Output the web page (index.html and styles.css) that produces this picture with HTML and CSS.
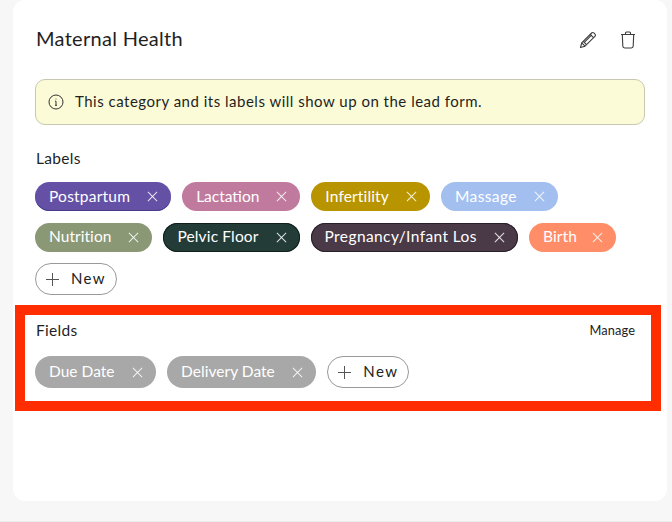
FILE: index.html
```html
<!DOCTYPE html>
<html lang="en">
<head>
<meta charset="utf-8">
<title>Maternal Health</title>
<link rel="stylesheet" href="styles.css">
</head>
<body>
<main class="card">
  <header class="head">
    <h1 class="title">Maternal Health</h1>
    <div class="actions">
      <svg class="icon" width="18" height="18" viewBox="0 0 18 18" fill="none" stroke="#3c3c3c" stroke-width="1.1" stroke-linejoin="round"><path d="M1.5 16.5l1.2-4.6L12.6 2c.7-.7 1.6-.7 2.2-.1l1.200 1.200c.6.6.6 1.500-.1 2.200L6 15.200z"/><path d="M2.700 11.900l3.300 3.300M4.200 10.400l3.300 3.300M11.200 3.400l3.300 3.300M5 11.700l7.800-7.800"/></svg>
      <svg class="icon" width="16" height="18" viewBox="0 0 16 18" fill="none" stroke="#3c3c3c" stroke-width="1.1" stroke-linejoin="round"><path d="M1 3.500h14M5.500 3.500V2c0-.6.4-1 1-1h3c.6 0 1 .4 1 1v1.500"/><path d="M2.300 3.500l.5 11.600c0 1.100.8 1.900 1.900 1.900h6.600c1.100 0 1.900-.8 1.900-1.900l.5-11.600"/></svg>
    </div>
  </header>

  <div class="notice">
    <svg class="info" width="16" height="16" viewBox="0 0 16 16" fill="none" stroke="#333" stroke-width="1"><circle cx="8" cy="8" r="7"/><path d="M8 7.200v4M7 11.300h2M7 7.200h1"/><circle cx="8" cy="4.900" r=".5" fill="#333" stroke="none"/></svg>
    <span class="notice-text">This category and its labels will show up on the lead form.</span>
  </div>

  <section class="labels">
    <h2 class="section-title">Labels</h2>
    <div class="chips">
      <span class="chip chip-purple">Postpartum<i class="x"></i></span>
      <span class="chip chip-pink">Lactation<i class="x"></i></span>
      <span class="chip chip-gold">Infertility<i class="x"></i></span>
      <span class="chip chip-blue">Massage<i class="x"></i></span>
      <span class="chip chip-sage">Nutrition<i class="x"></i></span>
      <span class="chip chip-green">Pelvic Floor<i class="x"></i></span>
      <span class="chip chip-plum">Pregnancy/Infant Los<i class="x"></i></span>
      <span class="chip chip-coral">Birth<i class="x"></i></span>
      <button class="new"><i class="plus"></i>New</button>
    </div>
  </section>

  <section class="fields">
    <div class="fields-head">
      <h2 class="section-title">Fields</h2>
      <a class="manage">Manage</a>
    </div>
    <div class="chips">
      <span class="chip chip-grey">Due Date<i class="x"></i></span>
      <span class="chip chip-grey">Delivery Date<i class="x"></i></span>
      <button class="new"><i class="plus"></i>New</button>
    </div>
  </section>
</main>
</body>
</html>
```

FILE: styles.css
```css
* { box-sizing: border-box; }
html, body { height: 100%; }
body {
  margin: 0;
  background: #f7f7f7;
  padding: 0 5px 21px 13px;
  font-family: "Lato", "Liberation Sans", sans-serif;
  color: #1f1f1f;
  border-bottom: 1px solid #ececec;
  overflow: hidden;
}
.card {
  height: 501px;
  background: #fff;
  border-radius: 12px;
  padding: 0 6px 0 2px;
}
.head {
  height: 79px;
  padding: 24px 25px 0 21px;
  display: flex;
  justify-content: space-between;
  align-items: flex-start;
}
.title {
  margin: 0;
  font-size: 20px;
  line-height: 28px;
  font-weight: 400;
  letter-spacing: .3px;
}
.actions { display: flex; gap: 23px; padding-top: 7px; }
.icon { display: block; }
.notice {
  margin: 0 16px 0 20px;
  height: 46px;
  display: flex;
  align-items: center;
  gap: 11px;
  padding-left: 12px;
  background: #fbfbd8;
  border: 1px solid #c8c8b0;
  border-radius: 10px;
  font-size: 15px;
  letter-spacing: .5px;
}
.notice-text { padding-bottom: 2px; }
.info { flex: none; }
.labels { padding: 23px 10px 0 20px; height: 180px; }
.section-title {
  margin: 0 0 0 1px;
  font-size: 15.5px;
  line-height: 20px;
  font-weight: 400;
  letter-spacing: .3px;
}
.chips {
  display: flex;
  flex-wrap: wrap;
  align-items: center;
  gap: 11.5px 11px;
  margin-top: 14px;
}
.chip {
  display: inline-flex;
  align-items: center;
  height: 29px;
  padding: 0 13px 2px 14px;
  border-radius: 15px;
  color: #fff;
  font-size: 15.5px;
  letter-spacing: .15px;
}
.x {
  position: relative;
  display: block;
  width: 11px;
  height: 11px;
  margin-left: 17px;
  top: 1px;
}
.x::before, .x::after {
  content: "";
  position: absolute;
  left: 5px;
  top: -1px;
  width: 1px;
  height: 13px;
  background: rgba(255,255,255,.85);
  transform: rotate(45deg);
}
.x::after { transform: rotate(-45deg); }
.chip-purple { background: #6450a5; box-shadow: inset 0 -1px #4a3a8c; letter-spacing: .22px; }
.chip-pink { background: #c07a9e; letter-spacing: 0; }
.chip-gold { background: #b89500; }
.chip-blue { background: #a3bff0; letter-spacing: .4px; }
.chip-sage { background: #8a9876; letter-spacing: .05px; }
.chip-green { background: #243c38; box-shadow: inset 0 0 0 1px #101f1c; }
.chip-plum { background: #4a3a47; box-shadow: inset 0 0 0 1px #2a2029; letter-spacing: .4px; }
.chip-coral { background: #ff8d68; }
.chip-coral .x { margin-left: 15px; }
.chip-grey { background: #a8a8a8; height: 32px; border-radius: 16px; letter-spacing: .03px; }
.new {
  display: inline-flex;
  align-items: center;
  width: 82px;
  height: 32px;
  padding: 0 0 2px 10px;
  background: #fff;
  border: 1px solid #999;
  border-radius: 16px;
  color: #222;
  font: inherit;
  font-size: 15px;
  letter-spacing: 1.4px;
}
.plus {
  position: relative;
  display: block;
  width: 13px;
  height: 13px;
  margin-right: 12px;
  top: 1px;
}
.plus::before, .plus::after {
  content: "";
  position: absolute;
  background: #555;
}
.plus::before { left: 6px; top: 0; width: 1px; height: 13px; }
.plus::after { left: 0; top: 6px; width: 13px; height: 1px; }
.fields {
  height: 106px;
  border: 10px solid #ff2d00;
  padding: 5px 16px 0 10px;
}
.fields-head { display: flex; justify-content: space-between; align-items: center; }
.manage { font-size: 12.8px; letter-spacing: .1px; color: #222; }
.fields .chips { margin-top: 16px; column-gap: 11.5px; }
```
